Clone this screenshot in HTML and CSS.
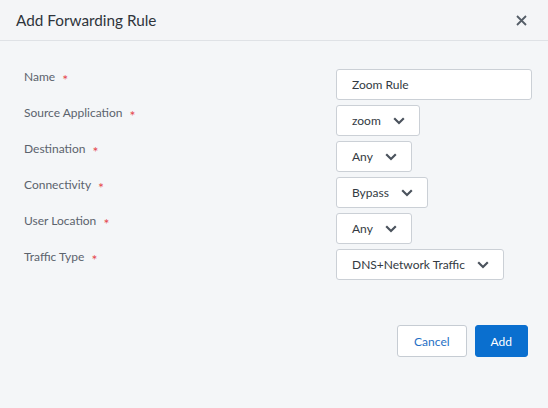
FILE: index.html
```html
<!DOCTYPE html>
<html>
<head>
    <title>Add Forwarding Rule</title>
    <link rel="stylesheet" href="styles.css">
</head>
<body>
    <div class="modal">
        <div class="modal-header">
            <h2>Add Forwarding Rule</h2>
            <button class="close" aria-label="Close">
                <svg width="11" height="11" viewBox="0 0 11 11"><path d="M1 1L10 10M10 1L1 10" stroke="#555d67" stroke-width="1.8" fill="none"/></svg>
            </button>
        </div>

        <div class="form">
            <label class="label">Name <span class="req">*</span></label>
            <input class="text-input" type="text" value="Zoom Rule">

            <label class="label">Source Application <span class="req">*</span></label>
            <div class="dropdown"><span>zoom</span><svg class="chev" width="12" height="8" viewBox="0 0 12 8"><path d="M1.2 1.3L6 6L10.8 1.3" stroke="#4b535d" stroke-width="2.2" fill="none"/></svg></div>

            <label class="label">Destination <span class="req">*</span></label>
            <div class="dropdown"><span>Any</span><svg class="chev" width="12" height="8" viewBox="0 0 12 8"><path d="M1.2 1.3L6 6L10.8 1.3" stroke="#4b535d" stroke-width="2.2" fill="none"/></svg></div>

            <label class="label">Connectivity <span class="req">*</span></label>
            <div class="dropdown"><span>Bypass</span><svg class="chev" width="12" height="8" viewBox="0 0 12 8"><path d="M1.2 1.3L6 6L10.8 1.3" stroke="#4b535d" stroke-width="2.2" fill="none"/></svg></div>

            <label class="label">User Location <span class="req">*</span></label>
            <div class="dropdown"><span>Any</span><svg class="chev" width="12" height="8" viewBox="0 0 12 8"><path d="M1.2 1.3L6 6L10.8 1.3" stroke="#4b535d" stroke-width="2.2" fill="none"/></svg></div>

            <label class="label">Traffic Type <span class="req">*</span></label>
            <div class="dropdown"><span>DNS+Network Traffic</span><svg class="chev" width="12" height="8" viewBox="0 0 12 8"><path d="M1.2 1.3L6 6L10.8 1.3" stroke="#4b535d" stroke-width="2.2" fill="none"/></svg></div>
        </div>

        <div class="modal-footer">
            <button class="btn btn-secondary">Cancel</button>
            <button class="btn btn-primary">Add</button>
        </div>
    </div>
</body>
</html>
```

FILE: styles.css
```css
html, body { margin: 0; padding: 0; }
body { font-family: Lato, "Open Sans", Arial, sans-serif; background: #f4f6f8; color: #333a42; width: 548px; height: 408px; overflow: hidden; }

.modal-header { height: 40px; display: flex; align-items: center; justify-content: space-between; padding: 0 21px 0 16px; border-bottom: 1px solid #dfe2e6; background: #f4f5f7; }
.modal-header h2 { margin: 0; font-size: 15.3px; font-weight: 400; color: #2e343b; }
.close { background: none; border: none; padding: 0; width: 11px; height: 11px; display: flex; cursor: pointer; }

.form { display: grid; grid-template-columns: 312px auto; row-gap: 5px; padding: 28px 16px 0 24px; }
.label { font-size: 12px; line-height: 16px; color: #5b636d; align-self: start; }
.req { color: #e5484d; font-size: 14px; margin-left: 4px; vertical-align: -4px; line-height: 0; }

.text-input, .dropdown { height: 31px; box-sizing: border-box; border: 1px solid #cbd0d6; border-radius: 3px; background: #fff; font-family: inherit; font-size: 12px; color: #333a42; }
.text-input { width: 196px; padding: 0 15px; outline: none; }
.dropdown { justify-self: start; display: flex; align-items: center; gap: 12px; padding: 0 14px 0 15px; }
.chev { display: block; margin-top: 1px; }

.modal-footer { display: flex; justify-content: flex-end; gap: 8px; padding-right: 20px; margin-top: 45px; }
.btn { height: 32px; padding: 0 16px; border-radius: 3px; font-family: inherit; font-size: 12px; cursor: pointer; }
.btn-secondary { background: #fff; border: 1px solid #c6ccd3; color: #1f6fc5; }
.btn-primary { background: #0a6fcf; border: 1px solid #0a6fcf; color: #fff; padding: 0 15px; }
```
